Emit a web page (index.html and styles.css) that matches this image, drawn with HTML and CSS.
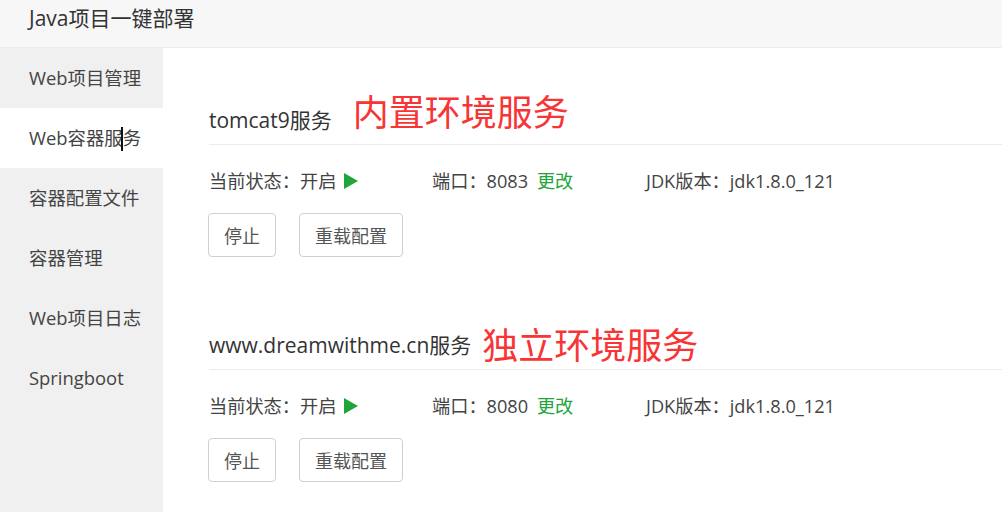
FILE: index.html
```html
<!DOCTYPE html>
<html lang="zh-CN">
<head>
<meta charset="utf-8">
<title>Java项目一键部署</title>
<link rel="stylesheet" href="styles.css">
</head>
<body>
<div class="app">
  <header class="topbar">Java项目一键部署</header>
  <div class="body">
    <nav class="sidebar">
      <div class="nav-item">Web项目管理</div>
      <div class="nav-item active">Web容器服务<span class="caret"></span></div>
      <div class="nav-item">容器配置文件</div>
      <div class="nav-item">容器管理</div>
      <div class="nav-item">Web项目日志</div>
      <div class="nav-item">Springboot</div>
    </nav>
    <main class="main">
      <section class="service">
        <div class="service-title">
          <span class="name">tomcat9服务</span>
          <span class="note note-first">内置环境服务</span>
        </div>
        <div class="status-row">
          <div class="cell">当前状态：开启 <span class="play"></span></div>
          <div class="cell">端口：8083 <a class="link">更改</a></div>
          <div class="cell">JDK版本：jdk1.8.0_121</div>
        </div>
        <div class="actions">
          <button class="btn">停止</button>
          <button class="btn">重载配置</button>
        </div>
      </section>
      <section class="service">
        <div class="service-title">
          <span class="name">www.dreamwithme.cn服务</span>
          <span class="note note-second">独立环境服务</span>
        </div>
        <div class="status-row">
          <div class="cell">当前状态：开启 <span class="play"></span></div>
          <div class="cell">端口：8080 <a class="link">更改</a></div>
          <div class="cell">JDK版本：jdk1.8.0_121</div>
        </div>
        <div class="actions">
          <button class="btn">停止</button>
          <button class="btn">重载配置</button>
        </div>
      </section>
    </main>
  </div>
</div>
</body>
</html>
```
FILE: styles.css
```css
* { box-sizing: border-box; }
html, body { margin: 0; padding: 0; }
body {
  width: 1002px;
  height: 512px;
  overflow: hidden;
  font-family: "Open Sans", "Noto Sans CJK SC", sans-serif;
  color: #333;
  background: #fff;
}
.app { display: flex; flex-direction: column; height: 512px; }
.topbar {
  height: 48px;
  line-height: 37px;
  padding-left: 29px;
  font-size: 21px;
  color: #333;
  background: #f7f7f7;
  border-bottom: 1px solid #ececec;
}
.body { display: flex; flex: 1; }
.sidebar {
  width: 163px;
  flex: none;
  background: #f0f0f0;
}
.nav-item {
  position: relative;
  height: 60px;
  line-height: 60px;
  padding-left: 29px;
  font-size: 18.4px;
  color: #444;
}
.nav-item.active { background: #fff; }
.caret {
  position: absolute;
  left: 121px;
  top: 19px;
  width: 2px;
  height: 24px;
  background: #111;
}
.main {
  flex: 1;
  padding: 46px 0 0 46px;
  min-width: 0;
}
.service + .service { margin-top: 62px; }
.service-title {
  display: flex;
  align-items: center;
  height: 51px;
  border-bottom: 1px solid #ececec;
  white-space: nowrap;
}
.name { font-size: 21px; color: #333; }
.note {
  color: #f73535;
  font-size: 36px;
  line-height: 40px;
  font-family: "Noto Sans CJK SC", sans-serif;
}
.note-first { margin-left: 21px; margin-bottom: 18px; }
.note-second { margin-left: 11px; margin-bottom: 2px; }
.status-row {
  display: grid;
  grid-template-columns: 223px 214px auto;
  margin-top: 18px;
  height: 36px;
  line-height: 36px;
  font-size: 18.2px;
  color: #444;
  white-space: nowrap;
}
.play {
  display: inline-block;
  width: 0;
  height: 0;
  margin-left: 3px;
  border-top: 8px solid transparent;
  border-bottom: 8px solid transparent;
  border-left: 14px solid #20a53a;
  vertical-align: -1px;
}
.link { color: #20a53a; margin-left: 4px; }
.actions {
  display: flex;
  gap: 23px;
  margin-top: 14px;
  margin-left: -1px;
}
.btn {
  height: 44px;
  padding: 0 15px;
  font-family: "Open Sans", "Noto Sans CJK SC", sans-serif;
  font-size: 18px;
  color: #555;
  background: #fff;
  border: 1px solid #cfcfcf;
  border-radius: 4px;
}
```
